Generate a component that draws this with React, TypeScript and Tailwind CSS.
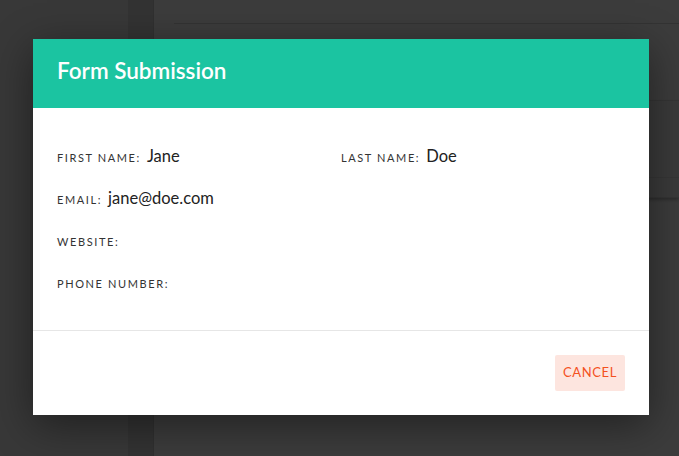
import React from 'react';

interface Field {
  label: string;
  value?: string;
}

const rows: Field[][] = [
  [{ label: 'First name', value: 'Jane' }, { label: 'Last name', value: 'Doe' }],
  [{ label: 'Email', value: 'jane@doe.com' }],
  [{ label: 'Website' }],
  [{ label: 'Phone number' }],
];

function FieldView({ field }: { field: Field }) {
  return (
    <div className="flex items-baseline">
      <span className="text-[11px] uppercase tracking-[1.6px] text-[#333]">{field.label}:</span>
      <span className="ml-[6px] text-[16.5px] text-[#222]">{field.value ?? '\u00a0'}</span>
    </div>
  );
}

export default function App() {
  return (
    <div className="relative h-[456px] w-[679px] overflow-hidden bg-[#3b3b3b] font-['Lato','Liberation_Sans',sans-serif]">
      {/* app behind the overlay */}
      <div className="flex h-full">
        <div className="w-[128px] bg-[#383838]" />
        <div className="w-[25px] bg-[#333333]" />
        <div className="flex-1 border-l border-[#303030] bg-[#3c3c3c] pl-[20px]">
          <div className="h-[24px] border-b border-[#333]" />
          <div className="mt-[76px] h-[98px] border-y border-[#353535] bg-[#3a3a3a] shadow-[0_2px_3px_rgba(0,0,0,0.25)]">
            <div className="mt-[76px] border-t border-[#363636]" />
          </div>
        </div>
      </div>

      {/* modal */}
      <div className="absolute left-[33px] top-[39px] w-[616px] bg-white shadow-[0_10px_40px_rgba(0,0,0,0.45)]">
        <div className="flex h-[69px] items-center bg-[#1bc4a1] px-[24px] pb-[5px]">
          <h2 className="text-[22.5px] font-semibold text-white">Form Submission</h2>
        </div>
        <div className="px-[24px] py-[27px]">
          {rows.map((row, i) => (
            <div key={i} className="grid h-[42px] grid-cols-2 items-center">
              {row.map((f) => (
                <FieldView key={f.label} field={f} />
              ))}
            </div>
          ))}
        </div>
        <div className="flex justify-end border-t border-[#e6e6e6] p-[24px]">
          <button className="h-[36px] w-[70px] rounded-[2px] bg-[#fde5df] text-[13px] uppercase tracking-[0.6px] text-[#f4511e]">
            Cancel
          </button>
        </div>
      </div>
    </div>
  );
}
